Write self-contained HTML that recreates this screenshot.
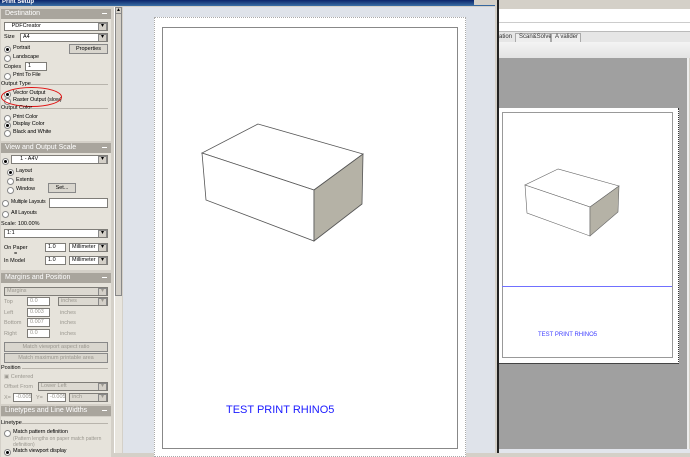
<!DOCTYPE html>
<html><head><style>
*{margin:0;padding:0;box-sizing:border-box}
body{width:690px;height:453px;overflow:hidden;position:relative;background:#d4d0c8;font-family:"Liberation Sans",sans-serif;font-size:6.5px;color:#000}
.a{position:absolute}
.hd{position:absolute;left:1px;width:110px;height:10px;background:#a9a59d;color:#fff;font-size:7px;padding:1px 4px;line-height:8px}
.hd:after{content:"";position:absolute;right:4px;top:4px;width:5px;height:1px;background:#fff}
.bd{position:absolute;left:1px;width:110px;background:#e6e3db}
.cb{position:absolute;height:9px;background:#fff;border:1px solid #7f7d78;line-height:7px;padding-left:2px;font-size:5.5px;overflow:hidden;white-space:nowrap}
.cb:after{content:"▾";position:absolute;right:0;top:0;width:7px;height:7px;background:#d4d0c8;border:1px solid #888;font-size:6px;line-height:5px;text-align:center}
.dis{color:#9a978f;background:#dcd9d1}
.r{position:absolute;font-size:5.5px;line-height:7px;padding-left:9px;white-space:nowrap;letter-spacing:-.1px}
.r:before{content:"";position:absolute;left:0;top:1px;width:5px;height:5px;border-radius:50%;background:#fff;border:1px solid #888}
.r.on:after{content:"";position:absolute;left:2px;top:3px;width:3px;height:3px;border-radius:50%;background:#000}
.t{position:absolute;font-size:5.5px;line-height:7px;white-space:nowrap}
.g{color:#9a978f}
.bx{position:absolute;height:9px;background:#fff;border:1px solid #7f7d78;font-size:5.5px;line-height:7px;padding-left:2px;overflow:hidden}
.bt{position:absolute;height:10px;background:#d9d6ce;border:1px solid #888;font-size:5.5px;line-height:8px;text-align:center}
.ln{position:absolute;height:1px;background:#b8b4ac}
</style></head><body>
<div class="a" style="left:0;top:0;width:497px;height:6px;background:linear-gradient(#0a246a,#3a6ea5)"></div>
<div class="a" style="left:2px;top:-1px;color:#fff;font-size:6px;font-weight:bold">Print Setup</div>
<div class="a" style="left:474px;top:0;width:22px;height:5px;background:#d4d0c8"></div>
<div class="hd" style="top:9px">Destination</div>
<div class="bd" style="top:19px;height:122px"></div>
<div class="cb" style="left:4px;top:22px;width:104px">&nbsp;&nbsp;&nbsp;PDFCreator</div>
<div class="t" style="left:4px;top:34px">Size</div>
<div class="cb" style="left:20px;top:33px;width:88px">A4</div>
<div class="r on" style="left:4px;top:45px">Portrait</div>
<div class="bt" style="left:69px;top:44px;width:39px">Properties</div>
<div class="r" style="left:4px;top:54px">Landscape</div>
<div class="t" style="left:4px;top:64px">Copies</div>
<div class="bx" style="left:25px;top:62px;width:22px">1</div>
<div class="r" style="left:4px;top:72px">Print To File</div>
<div class="t" style="left:1px;top:81px">Output Type</div><div class="ln" style="left:30px;top:84px;width:78px"></div>
<div class="r on" style="left:4px;top:90px">Vector Output</div>
<div class="r" style="left:4px;top:97px">Raster Output (slow)</div>
<div class="a" style="left:1px;top:87px;width:61px;height:20px;border:1px solid #e01010;border-radius:50%"></div>
<div class="t" style="left:1px;top:105px">Output Color</div><div class="ln" style="left:30px;top:108px;width:78px"></div>
<div class="r" style="left:4px;top:114px">Print Color</div>
<div class="r on" style="left:4px;top:121px">Display Color</div>
<div class="r" style="left:4px;top:129px">Black and White</div>
<div class="hd" style="top:143px">View and Output Scale</div>
<div class="bd" style="top:153px;height:117px"></div>
<div class="r on" style="left:2px;top:157px"></div>
<div class="cb" style="left:11px;top:155px;width:97px">&nbsp;&nbsp;&nbsp;&nbsp;1 - A4V</div>
<div class="r on" style="left:7px;top:168px">Layout</div>
<div class="r" style="left:7px;top:177px">Extents</div>
<div class="r" style="left:7px;top:186px">Window</div>
<div class="bt" style="left:48px;top:183px;width:28px">Set...</div>
<div class="r" style="left:2px;top:199px;font-size:5px">Multiple Layouts</div>
<div class="bx" style="left:49px;top:198px;width:59px;height:10px"></div>
<div class="r" style="left:2px;top:210px">All Layouts</div>
<div class="t" style="left:1px;top:221px">Scale: 100.00%</div>
<div class="cb" style="left:4px;top:229px;width:104px">1:1</div>
<div class="t" style="left:4px;top:245px">On Paper</div>
<div class="t" style="left:14px;top:251px">=</div>
<div class="t" style="left:4px;top:258px">In Model</div>
<div class="bx" style="left:45px;top:243px;width:21px">1.0</div>
<div class="bx" style="left:45px;top:256px;width:21px">1.0</div>
<div class="cb" style="left:69px;top:243px;width:39px">Millimeter</div>
<div class="cb" style="left:69px;top:256px;width:39px">Millimeter</div>
<div class="hd" style="top:273px">Margins and Position</div>
<div class="bd" style="top:283px;height:121px"></div>
<div class="cb dis" style="left:4px;top:287px;width:104px">Margins</div>
<div class="t g" style="left:4px;top:299px">Top</div><div class="bx dis" style="left:27px;top:297px;width:23px">0.0</div><div class="cb dis" style="left:58px;top:297px;width:50px">inches</div>
<div class="t g" style="left:4px;top:310px">Left</div><div class="bx dis" style="left:27px;top:308px;width:23px">0.003</div><div class="t g" style="left:60px;top:310px">inches</div>
<div class="t g" style="left:4px;top:320px">Bottom</div><div class="bx dis" style="left:27px;top:318px;width:23px">0.007</div><div class="t g" style="left:60px;top:320px">inches</div>
<div class="t g" style="left:4px;top:331px">Right</div><div class="bx dis" style="left:27px;top:329px;width:23px">0.0</div><div class="t g" style="left:60px;top:331px">inches</div>
<div class="bt g" style="left:4px;top:342px;width:104px">Match viewport aspect ratio</div>
<div class="bt g" style="left:4px;top:353px;width:104px">Match maximum printable area</div>
<div class="t" style="left:1px;top:365px">Position</div><div class="ln" style="left:22px;top:368px;width:86px"></div>
<div class="t g" style="left:4px;top:374px">▣ Centered</div>
<div class="t g" style="left:4px;top:384px">Offset From</div><div class="cb dis" style="left:38px;top:382px;width:70px">Lower Left</div>
<div class="t g" style="left:4px;top:395px">X=</div><div class="bx dis" style="left:13px;top:393px;width:19px">-0.005</div>
<div class="t g" style="left:36px;top:395px">Y=</div><div class="bx dis" style="left:47px;top:393px;width:19px">-0.005</div>
<div class="cb dis" style="left:69px;top:393px;width:39px">inch</div>
<div class="hd" style="top:406px">Linetypes and Line Widths</div>
<div class="bd" style="top:417px;height:40px"></div>
<div class="t" style="left:1px;top:420px">Linetype</div><div class="ln" style="left:22px;top:423px;width:86px"></div>
<div class="r" style="left:4px;top:429px">Match pattern definition</div>
<div class="t g" style="left:13px;top:436px;font-size:5px;line-height:6px">(Pattern lengths on paper match pattern<br>definition)</div>
<div class="r on" style="left:4px;top:448px">Match viewport display</div>
<div class="a" style="left:114px;top:7px;width:8px;height:446px;background:#e8e5de;border-left:1px solid #fff"></div>
<div class="a" style="left:115px;top:7px;width:7px;height:289px;background:#d4d0c8;border:1px solid #888"></div>
<div class="a" style="left:115px;top:7px;width:7px;height:7px;background:#d4d0c8;border:1px solid #888;font-size:5px;line-height:5px;text-align:center">▲</div>
<div class="a" style="left:123px;top:7px;width:372px;height:446px;background:#dfe3ea"></div>
<div class="a" style="left:154px;top:17px;width:312px;height:440px;background:#fff;border:1px dotted #aaa"></div>
<div class="a" style="left:162px;top:27px;width:296px;height:422px;border:1px solid #888"></div>
<svg class="a" style="left:0;top:0" width="690" height="453">
<polygon points="258,124 202,153 314,190 363,154" fill="#fff" stroke="#555" stroke-width=".8"/>
<polygon points="202,153 314,190 314,241 206,200" fill="#fff" stroke="#555" stroke-width=".8"/>
<polygon points="314,190 363,154 362,204 314,241" fill="#b5b2a6" stroke="#555" stroke-width=".8"/>
</svg>
<div class="a" style="left:226px;top:404px;color:#1a1aff;font-size:11px">TEST PRINT RHINO5</div>
<div class="a" style="left:495px;top:0;width:2px;height:453px;background:#d4d0c8"></div>
<div class="a" style="left:497px;top:0;width:2px;height:453px;background:#222"></div>
<div class="a" style="left:499px;top:0;width:191px;height:9px;background:#d4d0c8"></div>
<div class="a" style="left:499px;top:9px;width:191px;height:14px;background:#fff;border-bottom:1px solid #ccc"></div>
<div class="a" style="left:499px;top:23px;width:191px;height:9px;background:#fff;border-bottom:1px solid #bbb"></div>
<div class="a" style="left:499px;top:32px;width:191px;height:10px;background:#e6e6e6"></div>
<div class="a" style="left:499px;top:34px;font-size:6px;color:#333">ation</div>
<div class="a" style="left:515px;top:33px;width:36px;height:9px;border:1px solid #aaa;border-bottom:none;background:#eee;font-size:6px;color:#333;padding-left:3px">Scan&amp;Solve</div>
<div class="a" style="left:551px;top:33px;width:30px;height:9px;border:1px solid #aaa;border-bottom:none;background:#eee;font-size:6px;color:#333;padding-left:3px">A valider</div>
<div class="a" style="left:499px;top:42px;width:191px;height:16px;background:linear-gradient(#f4f4f4,#e4e4e4)"></div>
<div class="a" style="left:499px;top:58px;width:190px;height:391px;background:#a0a0a0;border-right:2px solid #eee"></div>
<div class="a" style="left:499px;top:449px;width:191px;height:4px;background:#e2e5ec"></div>
<div class="a" style="left:499px;top:108px;width:180px;height:256px;background:#fff;border-right:1px dotted #333;border-bottom:1px solid #444"></div>
<div class="a" style="left:502px;top:112px;width:171px;height:246px;border:1px solid #999"></div>
<div class="a" style="left:502px;top:286px;width:170px;height:1px;background:#7070ff"></div>
<svg class="a" style="left:0;top:0" width="690" height="453">
<polygon points="558,169 525,185 590,207 619,186" fill="#fff" stroke="#666" stroke-width=".6"/>
<polygon points="525,185 590,207 590,236 527,213" fill="#fff" stroke="#666" stroke-width=".6"/>
<polygon points="590,207 619,186 618,212 590,236" fill="#b5b2a6" stroke="#666" stroke-width=".6"/>
</svg>
<div class="a" style="left:538px;top:332px;color:#4040ff;font-size:6px">TEST PRINT RHINO5</div>
</body></html>
